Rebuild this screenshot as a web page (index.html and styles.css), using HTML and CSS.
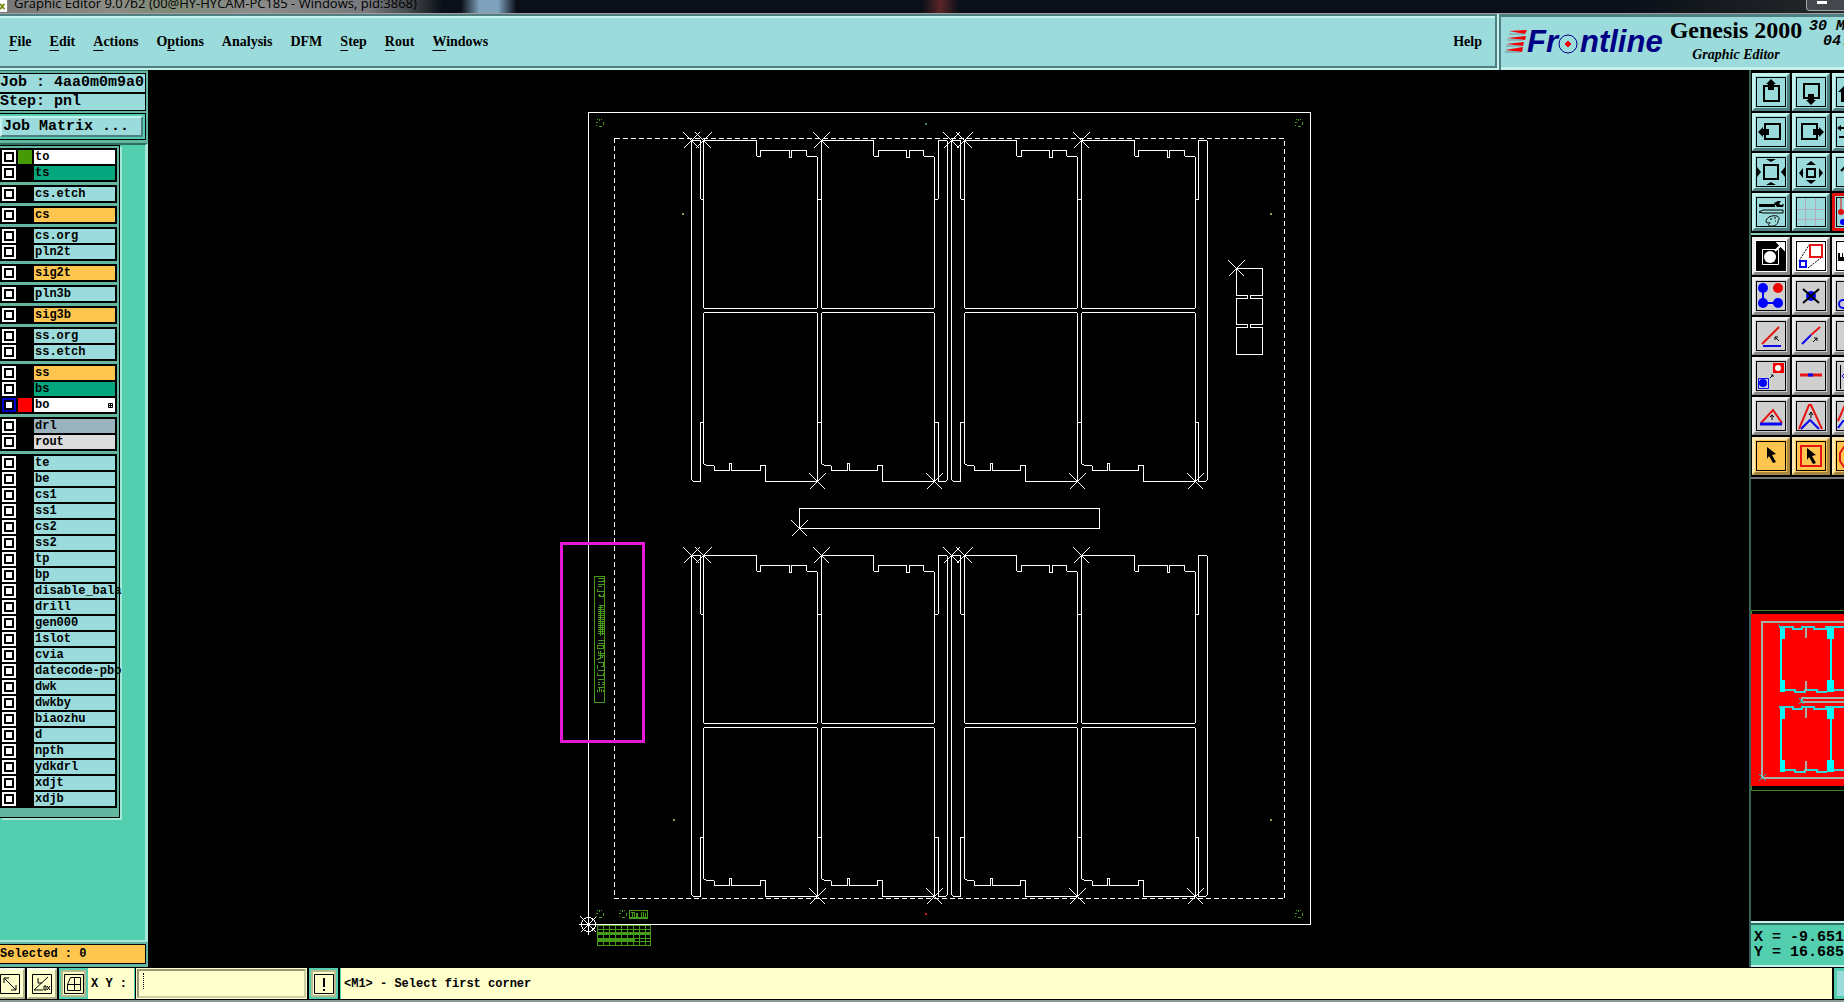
FILE: index.html
```html
<!DOCTYPE html>
<html lang="en">
<head>
<meta charset="utf-8">
<title>Graphic Editor</title>
<link rel="stylesheet" href="styles.css">
</head>
<body>
<header class="titlebar">
  <svg class="app-icon" viewBox="0 0 9 20" aria-hidden="true"><rect width="8" height="20" fill="#fff"/><path d="M0 11l5 6M5 11l-5 6" stroke="#7a8a10" stroke-width="2"/></svg>
  <span class="title">Graphic Editor 9.07b2 (00@HY-HYCAM-PC185 - Windows, pid:3868)</span>
  <span class="window-buttons"><i></i></span>
</header>

<div class="topbar">
  <nav class="menubar">
    <button><u>F</u>ile</button><button><u>E</u>dit</button><button><u>A</u>ctions</button><button>O<u>p</u>tions</button><button>Analysis</button><button>DFM</button><button><u>S</u>tep</button><button><u>R</u>out</button><button><u>W</u>indows</button>
    <button class="help">Help</button>
  </nav>
  <div class="brand">
    <svg class="logo" width="160" height="36" viewBox="0 0 160 36" role="img" aria-label="Frontline">
      <g fill="#f00000"><path d="M4 7l18-1-2 4zM2 14l19-2-1 4zM1 20l18-2-1 4zM0 26l18-3-1 5z"/></g>
      <path d="M4 10h15M2 16h16M1 22h15M0 28h15" stroke="#7a8f98" stroke-width="1"/>
      <g class="logo-text"><text x="22" y="28">Fr</text><text x="75" y="28">ntline</text></g>
      <circle cx="63" cy="20" r="9" fill="none" stroke="#000084" stroke-width="1"/>
      <path d="M63 17l3 3-3 3-3-3z" fill="#f00000" stroke="#f00000" stroke-width="1"/>
    </svg>
    <div class="product"><strong>Genesis 2000</strong><em>Graphic Editor</em></div>
    <div class="clock"><span>30 MAY</span><span class="time">04:12</span></div>
  </div>
</div>

<main class="workspace">
  <aside class="sidebar">
    <div class="job">
      <div class="cell">Job : 4aa0m0m9a0</div>
      <div class="cell">Step: pnl</div>
    </div>
    <div class="matrix"><button>Job Matrix ...</button></div>
    <div class="layer-area">
      <div class="layers">
        <div class="group">
          <label class="row"><input type="checkbox"><i class="swatch green"></i><span class="name white">to</span></label>
          <label class="row"><input type="checkbox"><i class="swatch"></i><span class="name jade">ts</span></label>
        </div>
        <div class="group"><label class="row"><input type="checkbox"><i class="swatch"></i><span class="name">cs.etch</span></label></div>
        <div class="group"><label class="row"><input type="checkbox"><i class="swatch"></i><span class="name amber">cs</span></label></div>
        <div class="group">
          <label class="row"><input type="checkbox"><i class="swatch"></i><span class="name">cs.org</span></label>
          <label class="row"><input type="checkbox"><i class="swatch"></i><span class="name">pln2t</span></label>
        </div>
        <div class="group"><label class="row"><input type="checkbox"><i class="swatch"></i><span class="name amber">sig2t</span></label></div>
        <div class="group"><label class="row"><input type="checkbox"><i class="swatch"></i><span class="name">pln3b</span></label></div>
        <div class="group"><label class="row"><input type="checkbox"><i class="swatch"></i><span class="name amber">sig3b</span></label></div>
        <div class="group">
          <label class="row"><input type="checkbox"><i class="swatch"></i><span class="name">ss.org</span></label>
          <label class="row"><input type="checkbox"><i class="swatch"></i><span class="name">ss.etch</span></label>
        </div>
        <div class="group">
          <label class="row"><input type="checkbox"><i class="swatch"></i><span class="name amber">ss</span></label>
          <label class="row"><input type="checkbox"><i class="swatch"></i><span class="name jade">bs</span></label>
          <label class="row"><input type="checkbox" class="work"><i class="swatch red"></i><span class="name white">bo<svg class="snap" width="5" height="5" viewBox="0 0 5 5" aria-hidden="true"><path d="M.5 .5h4v4h-4zM2.5 0v5M0 2.5h5" fill="none" stroke="#000"/></svg></span></label>
        </div>
        <div class="group">
          <label class="row"><input type="checkbox"><i class="swatch"></i><span class="name slate">drl</span></label>
          <label class="row"><input type="checkbox"><i class="swatch"></i><span class="name silver">rout</span></label>
        </div>
        <div class="group">
          <label class="row"><input type="checkbox"><i class="swatch"></i><span class="name">te</span></label>
          <label class="row"><input type="checkbox"><i class="swatch"></i><span class="name">be</span></label>
          <label class="row"><input type="checkbox"><i class="swatch"></i><span class="name">cs1</span></label>
          <label class="row"><input type="checkbox"><i class="swatch"></i><span class="name">ss1</span></label>
          <label class="row"><input type="checkbox"><i class="swatch"></i><span class="name">cs2</span></label>
          <label class="row"><input type="checkbox"><i class="swatch"></i><span class="name">ss2</span></label>
          <label class="row"><input type="checkbox"><i class="swatch"></i><span class="name">tp</span></label>
          <label class="row"><input type="checkbox"><i class="swatch"></i><span class="name">bp</span></label>
          <label class="row"><input type="checkbox"><i class="swatch"></i><span class="name">disable_bala</span></label>
          <label class="row"><input type="checkbox"><i class="swatch"></i><span class="name">drill</span></label>
          <label class="row"><input type="checkbox"><i class="swatch"></i><span class="name">gen000</span></label>
          <label class="row"><input type="checkbox"><i class="swatch"></i><span class="name">1slot</span></label>
          <label class="row"><input type="checkbox"><i class="swatch"></i><span class="name">cvia</span></label>
          <label class="row"><input type="checkbox"><i class="swatch"></i><span class="name">datecode-pbo</span></label>
          <label class="row"><input type="checkbox"><i class="swatch"></i><span class="name">dwk</span></label>
          <label class="row"><input type="checkbox"><i class="swatch"></i><span class="name">dwkby</span></label>
          <label class="row"><input type="checkbox"><i class="swatch"></i><span class="name">biaozhu</span></label>
          <label class="row"><input type="checkbox"><i class="swatch"></i><span class="name">d</span></label>
          <label class="row"><input type="checkbox"><i class="swatch"></i><span class="name">npth</span></label>
          <label class="row"><input type="checkbox"><i class="swatch"></i><span class="name">ydkdrl</span></label>
          <label class="row"><input type="checkbox"><i class="swatch"></i><span class="name">xdjt</span></label>
          <label class="row"><input type="checkbox"><i class="swatch"></i><span class="name">xdjb</span></label>
        </div>
      </div>
    </div>
    <div class="selected">Selected : 0</div>
  </aside>

  <svg class="canvas" viewBox="148 70 1601 897" role="img" aria-label="Panel pnl">
    <defs>
      <path id="x" d="M-8-8L8 8M8-8L-8 8"/>
      <path id="fid" d="M0-4V-2M-3-2L-2-3M3-2L2-3M-4 0H-2M4-1V2M-3 2V3M-1 4H2"/>
      <path id="ta" d="M0 0H53V15L54 16H57V10H86V17H88V10H103V15L104 16H113L114 17V167L113 168H1L0 167Z"/>
      <path id="tb" d="M0 0H52V15L53 16H57V10H85V17H88V10H102V15L103 16H112L113 17V167L112 168H1L0 167Z"/>
      <path id="ba" d="M1 0H113L114 1V169H62V153H57V158H28V151H26V158H11V154L10 153H3L0 151V1Z"/>
      <path id="bb" d="M1 0H112L113 1V169H61V153H56V158H28V151H26V158H10V154L9 153H3L0 151V1Z"/>
      <g id="array">
        <use href="#ta" x="703" y="140"/><use href="#tb" x="821" y="140"/><use href="#tb" x="964" y="140"/><use href="#ta" x="1081" y="140"/>
        <use href="#ba" x="703" y="312"/><use href="#bb" x="821" y="312"/><use href="#bb" x="964" y="312"/><use href="#ba" x="1081" y="312"/>
        <path d="M703 199H701L700 198V140H691V479L693 481H700V422H703M817 199H821M817 422H821M934 199H937L938 198V140H946L947 141V479L945 481H938V422H934M964 199H961L960 198V140H951V479L953 481H960V422H964M1077 199H1081M1077 422H1081M1195 199H1198V140H1206L1207 141V479L1205 481H1198V422H1195"/>
        <use href="#x" x="691" y="140"/><use href="#x" x="703" y="140"/><use href="#x" x="821" y="140"/><use href="#x" x="951" y="140"/><use href="#x" x="964" y="140"/><use href="#x" x="1081" y="140"/>
        <use href="#x" x="817" y="481"/><use href="#x" x="934" y="481"/><use href="#x" x="1077" y="481"/><use href="#x" x="1195" y="481"/>
      </g>
    </defs>
    <g class="lines" transform="translate(.5 .5)">
      <rect x="588" y="112" width="722" height="812"/>
      <rect x="614" y="138" width="670" height="760" stroke-dasharray="5 3"/>
      <use href="#array"/>
      <use href="#array" y="415"/>
      <path d="M799 508H1099V528H799Z"/><use href="#x" x="799" y="528"/>
      <path d="M1236 268H1262V295H1250V298H1262V324H1250V327H1262V354H1236V327H1247V324H1236V298H1247V295H1236Z"/><use href="#x" x="1236" y="268"/>
      <circle cx="588" cy="924" r="7"/><path d="M578 924H598M588 914V934"/><use href="#x" x="588" y="924"/>
    </g>
    <g class="marks" transform="translate(.5 .5)">
      <use href="#fid" x="599" y="122"/><use href="#fid" x="1298" y="122"/><use href="#fid" x="599" y="913"/><use href="#fid" x="622" y="913"/><use href="#fid" x="1298" y="913"/>
      <rect x="594" y="576" width="10" height="126"/>
      <path d="M597 578H603M597 581H603V579M597 584H603M597 586H601M597 588V591H603M599 593V596H603V593M597 595H600"/>
      <path d="M600 604V635M598 605H603M597 607H602M597 609H603M597 611H603M597 613H603M597 615H603M597 617H603M597 619H603M597 621H603M597 623H603M597 625H603M597 627H603M597 629H603M597 631H603M597 633H603M602 620V634"/>
      <path d="M597 640H603M597 643H603M597 645V648H603V645ZM598 650V653H603M597 655H603M600 650V657M597 659L603 656M597 662H603V665M597 664V668M600 666H603M597 670H603M597 672V675H603V672M597 679H603M597 682H599M601 682H603M597 684H599M601 684H603M597 687H603M599 686V691M601 688V691M597 689V691M603 689V691"/>
      <rect x="629" y="910" width="18" height="8"/><path d="M630 912H634M632 912V917M634 912V917M636 912V917M637 912V917H639M641 911V917M643 911V917M645 917V912M646 912H647M629 917H647"/>
      <path d="M597 925H650V945H597ZM597 929H650M597 932H650M597 933H650M597 934H650M597 938H634M597 939H634M597 940H634M597 941H650M634 938H650M603 925V945M609 925V945M615 925V945M621 925V945M627 925V945M633 925V945M639 925V945M645 925V945"/>
    </g>
    <g fill="#9b9b4c"><rect x="682" y="213" width="2" height="2"/><rect x="1270" y="213" width="2" height="2"/><rect x="673" y="819" width="2" height="2"/><rect x="1270" y="819" width="2" height="2"/><rect x="925" y="123" width="2" height="2" fill="#4c8050"/><rect x="925" y="913" width="2" height="2" fill="#c01010"/></g>
    <rect x="561.5" y="543.5" width="82" height="198" fill="none" stroke="#e619d9" stroke-width="3"/>
  </svg>

  <aside class="toolbox">
    <div class="tools">
      <button aria-label="Pan up"><svg viewBox="0 0 30 30"><path d="M8 9H23V24H8Z" class="k2"/><path d="M15 2l5 5h-2v6h-6V7h-2z"/></svg></button>
      <button aria-label="Pan down"><svg viewBox="0 0 30 30"><path d="M8 7H23V21H8Z" class="k2"/><path d="M15 28l5-5h-2v-6h-6v6h-2z"/></svg></button>
      <button aria-label="Home"><svg viewBox="0 0 30 30"><path d="M2 15L8 9V25H5V15Z"/></svg></button>
      <button aria-label="Pan left"><svg viewBox="0 0 30 30"><path d="M9 7H24V22H9Z" class="k2"/><path d="M2 15l5-5v2h6v6H7v2z"/></svg></button>
      <button aria-label="Pan right"><svg viewBox="0 0 30 30"><path d="M6 7H21V22H6Z" class="k2"/><path d="M28 15l-5-5v2h-6v6h6v2z"/></svg></button>
      <button aria-label="Previous view"><svg viewBox="0 0 30 30"><path d="M1 11l4-3v2h9v2H5v2zM3 19h12v2H3z"/></svg></button>
      <button aria-label="Zoom in"><svg viewBox="0 0 30 30"><path d="M8 8H22V22H8Z" class="k2"/><path d="M15 5l-5-3h10zM15 25l-5 3h10zM5 15L1 10v10zM25 15l4-5v10z"/></svg></button>
      <button aria-label="Zoom out"><svg viewBox="0 0 30 30"><path d="M11 12H19V20H11Z" class="k2"/><path d="M15 4l5 4H10zM15 27l5-4H10zM3 16l4-5v10zM27 16l-4-5v10z"/></svg></button>
      <button aria-label="Zoom undo"><svg viewBox="0 0 30 30"><path d="M5 14l4-4" class="k2"/></svg></button>
      <button aria-label="Options"><svg viewBox="0 0 30 30"><path d="M3 7h16v3H3zM18 6l4-2h3l-2 3 2 1 3-1-1 3h-6z"/><path d="M3 15l4-2h20v3H7zM10 25c0-5 6-7 11-6 4 2 1 4 1 6s-4 5-8 4c-3-1-1-2 0-3s-3 1-4-1zM14 22h2M18 21h2M19 24h1" class="k"/></svg></button>
      <button aria-label="Grid"><svg viewBox="0 0 30 30"><path d="M9.5 1v28M19.5 1v28M1 12.5h28M1 22.5h28" stroke="#b5a9bd"/></svg></button>
      <button class="on" aria-label="Nets"><svg viewBox="0 0 30 30"><path d="M5 1v13" stroke="#e01010"/><circle cx="5" cy="15" r="3" fill="#e01010"/><circle cx="7" cy="25" r="3" fill="#00f"/></svg></button>
    </div>
    <div class="tools grey">
      <button class="white" aria-label="Features"><svg viewBox="0 0 30 30"><path d="M1 1h28v28H1z"/><path d="M6.5 8.5h16v15h-16z" fill="none" stroke="#fff"/><circle cx="14" cy="16" r="6" fill="#fff"/><path d="M19 10l5-5M22 2h6v6z" stroke="#fff" stroke-width="2" fill="#fff"/></svg></button>
      <button class="white" aria-label="Scale"><svg viewBox="0 0 30 30"><path d="M3 20L13 4M12 27L26 16" class="k" stroke-dasharray="2 1"/><path d="M14 4h12v12H14z" class="r2"/><path d="M4 20h6v6H4z" class="b2"/></svg></button>
      <button class="white" aria-label="Measure"><svg viewBox="0 0 30 30"><path d="M2 12h2v4h2v-4h1v4h2v-4h2v8H2z"/></svg></button>
      <button aria-label="Add feature"><svg viewBox="0 0 30 30"><path d="M7 7v15h15" stroke="#00f" stroke-width="2" fill="none"/><g fill="#00f"><circle cx="7" cy="7" r="5"/><circle cx="7" cy="22" r="5"/><circle cx="22" cy="22" r="5"/></g><circle cx="22" cy="7" r="5" fill="#f00000"/></svg></button>
      <button aria-label="Delete"><svg viewBox="0 0 30 30"><circle cx="15" cy="15" r="5" fill="#00f"/><path d="M7 8l16 14M23 8L7 22" class="k2"/></svg></button>
      <button aria-label="Reshape"><svg viewBox="0 0 30 30"><circle cx="7" cy="23" r="4" class="b2"/></svg></button>
      <button aria-label="Rotate line"><svg viewBox="0 0 30 30"><path d="M6 23L23 6" class="r2"/><path d="M7 25h18" class="b2"/><path d="M23 20l-4-4m0 3v-3h3" class="k"/></svg></button>
      <button aria-label="Extend line"><svg viewBox="0 0 30 30"><path d="M15 14L24 6" class="r2"/><path d="M6 23L15 14" class="b2"/><path d="M17 21l4-4m-3 0h3v3" class="k"/></svg></button>
      <button aria-label="Trim"><svg viewBox="0 0 30 30"></svg></button>
      <button aria-label="Copy pad"><svg viewBox="0 0 30 30"><path d="M17 2h11v10H17z" fill="#f00000"/><circle cx="22" cy="7" r="3" fill="#fff"/><path d="M2.5 17.5h10v10h-10z" class="b1"/><circle cx="7" cy="22" r="4" fill="#00f"/><path d="M14 17l3-3m-2 0h2v2" class="k"/></svg></button>
      <button aria-label="Break line"><svg viewBox="0 0 30 30"><path d="M4 14h22" class="r3"/><path d="M12 14h5" class="b3"/></svg></button>
      <button aria-label="Move edge"><svg viewBox="0 0 30 30"><path d="M4.5 4v24" class="k"/><path d="M10 11l-4 4 4 4" class="b1"/></svg></button>
      <button aria-label="Stretch"><svg viewBox="0 0 30 30"><path d="M5 22L17 9l9 13" class="r2"/><path d="M4 23h22" class="b3"/><path d="M16 19v-4m-2 1l2-2 2 2" class="k"/></svg></button>
      <button aria-label="Offset"><svg viewBox="0 0 30 30"><path d="M3 28L13 4h2l11 24" class="r2"/><path d="M5 28l9-9 9 9" class="b2"/><path d="M15 17v-5m-2 2l2-3 2 3" class="k"/></svg></button>
      <button aria-label="Corner"><svg viewBox="0 0 30 30"><path d="M2 20L9 4" class="r2"/><path d="M2 27l5-7h5" class="b2"/></svg></button>
      <button class="amber" aria-label="Select"><svg viewBox="0 0 30 30"><path d="M11 6l9 7-4 1 4 7-3 1-4-7-2 3z"/></svg></button>
      <button class="amber" aria-label="Select in frame"><svg viewBox="0 0 30 30"><path d="M5 5h20v20H5z" class="r2"/><path d="M11 7l9 7-4 1 4 7-3 1-4-7-2 3z"/></svg></button>
      <button class="amber" aria-label="Select in polygon"><svg viewBox="0 0 30 30"><path d="M10 6H8L4 12v8l4 6h2" class="r2"/></svg></button>
    </div>
    <div class="overview">
      <svg width="95" height="182" viewBox="1749 609 95 182" role="img" aria-label="Overview">
        <path d="M1844 610.5H1751.5V790.5H1844" fill="none" stroke="#4a8a20"/>
        <path d="M1751 614h93v172h-93z" fill="#f00"/>
        <path d="M1844 622H1762V778H1844M1844 698H1802V702H1844" fill="none" stroke="#a8b0a8" stroke-width="2"/>
        <g id="mini" fill="none"><path d="M1781 628V692M1831 628V692" stroke="#00ffff" stroke-width="2"/><path d="M1780 626h5v13h-4zM1827 626h7v13h-7zM1781 680h4v12h-4zM1827 680h7v12h-7z" fill="#00ffff"/><path d="M1779 627h14v2h9v-2h12v2h12v-2h18M1785 690h10v2h10v-2h12v2h10M1834 690h10" stroke="#2fd6d6" stroke-width="2"/><path d="M1806 628v10M1806 681v10" stroke="#a8b0a8" stroke-width="2"/></g>
        <use href="#mini" y="80"/>
        <path d="M1759 774l7 7M1766 774l-7 7M1778 624l6 6M1799 698l5 6M1804 698l-5 6" stroke="#00c8c8"/>
      </svg>
    </div>
    <div class="coords"><span>X = -9.651</span><span>Y = 16.685</span></div>
  </aside>
</main>

<footer class="statusbar">
  <button class="sb first" aria-label="Line mode"><svg viewBox="0 0 20 20"><path d="M.5 .5h19v19H.5zM4 4l12 12M4 9V4h5M16 11v5h-5" class="k"/></svg></button>
  <button class="sb" aria-label="Angle mode"><svg viewBox="0 0 20 20"><path d="M.5 .5h19v19H.5zM2 16L16 3M6 4v5h4M2 16h9M14 12h-2v4h2zM15 12l3 4M18 12l-3 4" class="k"/></svg></button>
  <button class="sb teal" aria-label="Snap grid"><svg viewBox="0 0 20 20"><path d="M.5 .5h19v19H.5zM3.500 10.500l3-7h10v13h-13zM10.500 3v13M3 10.500h13" class="k"/></svg></button>
  <label class="xy" for="xy">X Y :</label>
  <div class="entry"><input id="xy" type="text"><i class="caret"></i></div>
  <button class="sb teal bang" aria-label="Message"><svg viewBox="0 0 20 20"><path d="M.5 .5h19v19H.5z" class="k"/><path d="M9 4h2v9H9zM9 15h2v2H9z"/></svg></button>
  <output class="message">&lt;M1&gt; - Select first corner</output>
  <span class="end"></span>
</footer>
</body>
</html>
```
FILE: styles.css
```css
:root {
  --teal: #9bdbdb;
  --mint: #53ceae;
  --mint-dark: #2f6f60;
  --light: #c4f2ee;
  --shade: #4f7f80;
  --amber: #ffc64f;
  --cream: #ffffcc;
  --mono: "Liberation Mono", "Courier New", monospace;
  --serif: "Liberation Serif", "Times New Roman", serif;
}

* { box-sizing: border-box; }

body {
  margin: 0;
  height: 100vh;
  display: flex;
  flex-direction: column;
  overflow: hidden;
  background: #000;
  color: #000;
  font: bold 12px/16px var(--mono);
}

button {
  margin: 0;
  padding: 0;
  border: 0;
  background: none;
  color: inherit;
  font: inherit;
}

svg { display: block; }

.k, .k2, .r2, .r3, .b1, .b2, .b3 { fill: none; stroke: #000; stroke-width: 1; }
.k2, .r2, .b2 { stroke-width: 2; }
.r3, .b3 { stroke-width: 3; }
.r2, .r3 { stroke: #e81414; }
.b1, .b2, .b3 { stroke: #0a0af0; }

/* Title bar */
.titlebar {
  flex: none;
  display: flex;
  align-items: flex-end;
  gap: 6px;
  height: 14px;
  overflow: hidden;
  border-bottom: 1px solid #a0a0a0;
  background: linear-gradient(90deg, #777 0, #8d8d86 6%, #7f8a76 9%, #8c8c8c 14%, #77797c 20%, #4a4d51 22%, #0a0f18 24%, #0a0f18 25%, #7fa3bd 26%, #7fa3bd 27%, #0a0f18 28%, #0b1018 50%, #5a2528 51%, #0a0f18 52%, #0a0f18 88%, #26292b 100%);
}
.app-icon { width: 8px; height: 20px; flex: none; }
.title {
  flex: 1;
  white-space: nowrap;
  font: 13px/20px "Open Sans", "Noto Sans", sans-serif;
}
.window-buttons {
  flex: none;
  width: 38px;
  height: 12px;
  padding: 2px 10px;
  margin-bottom: 2px;
  border: 1px solid #a0a4a8;
  border-width: 0 0 1px 1px;
  border-radius: 0 0 0 4px;
  background: #44484c;
}
.window-buttons i { display: block; width: 10px; height: 3px; background: #fff; }

/* Menu and brand */
.topbar { flex: none; display: flex; height: 56px; background: var(--teal); }
.menubar {
  flex: 1;
  display: flex;
  align-items: center;
  gap: 18px;
  padding: 2px 13px 0 9px;
  border: 2px solid var(--shade);
  border-left: 0;
  box-shadow: inset 0 2px var(--light), 0 2px var(--light);
  margin-bottom: 2px;
  font: bold 14px/20px var(--serif);
}
.menubar u { text-underline-offset: 4px; text-decoration-skip-ink: none; }
.help { margin-left: auto; }
.brand {
  flex: none;
  display: flex;
  width: 345px;
  overflow: hidden;
  margin-left: 2px;
  padding-left: 4px;
  border: solid var(--shade);
  border-width: 3px 0 0 2px;
  box-shadow: inset 0 -3px var(--light), -2px 0 var(--light);
}
.logo { flex: none; margin: 7px 0 0; }
.logo-text { font: italic bold 31px "Liberation Sans", Arial, sans-serif; fill: #000084; }
.product { flex: none; display: flex; flex-direction: column; align-items: center; width: 134px; margin-left: 4px; }
.product strong { font: bold 24px/26px var(--serif); white-space: nowrap; }
.product em { font: italic bold 14px/24px var(--serif); }
.clock { flex: none; display: flex; flex-direction: column; margin-left: 6px; font: italic bold 15px/15px var(--mono); padding-top: 2px; }
.time { padding-left: 14px; }

/* Workspace */
.workspace { flex: 1; min-height: 0; display: flex; }

.sidebar {
  flex: none;
  display: flex;
  flex-direction: column;
  width: 148px;
  background: #63b7a0;
  box-shadow: inset 0 1px #2f6f60;
}
.job { margin: 3px 2px 0 0; border: 1px solid #000; border-left: 0; background: var(--teal); font-size: 15px; line-height: 18px; }
.job .cell { height: 18px; white-space: pre; }
.job .cell + .cell { border-top: 2px solid #000; line-height: 16px; }
.matrix { margin: 2px 2px 3px 0; padding: 2px; border: 1px solid #000; border-left: 0; padding-left: 0; background: var(--mint); }
.matrix button {
  display: block;
  width: 100%;
  padding-left: 1px;
  border: 2px solid;
  border-color: var(--light) var(--shade) var(--shade) var(--light);
  background: var(--teal);
  font-size: 15px;
  line-height: 17px;
  text-align: left;
  white-space: pre;
}
.layer-area {
  flex: 1;
  min-height: 0;
  border: solid;
  border-width: 2px 3px 2px 0;
  border-color: var(--mint-dark) #a5e8da #a5e8da;
  background: var(--mint);
}
.layers {
  display: flex;
  flex-direction: column;
  gap: 3px;
  width: 120px;
  padding: 2px 2px 9px 0;
  border: solid #000;
  border-width: 1px 1px 1px 0;
  background: #63b7a0;
  box-shadow: 2px 2px #a5e8da;
}
.group { width: 117px; padding: 1px 0; background: #000; }
.row { display: flex; align-items: center; gap: 2px; height: 16px; padding: 0 0 0 2px; }
.row input {
  appearance: none;
  flex: none;
  width: 14px;
  height: 14px;
  margin: 0;
  border: 2px solid #fff;
  background: #fff;
  box-shadow: inset 0 0 0 2px #000;
}
.row input.work { border-color: #0000c8; }
.swatch { flex: none; width: 14px; height: 14px; }
.swatch.green { background: #459a05; }
.swatch.red { background: #f00; }
.name { display: flex; align-items: center; width: 81px; height: 14px; padding-left: 1px; background: var(--teal); white-space: pre; line-height: 14px; }
.name.white { background: #fff; }
.name.jade { background: #04a67e; }
.name.amber { background: var(--amber); }
.name.slate { background: #9ab3bd; }
.name.silver { background: #dcdcdc; }
.snap { margin: 0 2px 0 auto; }
.selected {
  flex: none;
  margin: 2px 2px 3px 0;
  border: 1px solid #000;
  border-left: 0;
  background: var(--amber);
  line-height: 18px;
}

.canvas { flex: 1; min-width: 0; height: 100%; }
.lines { fill: none; stroke: #fff; shape-rendering: crispEdges; }
.marks { fill: none; stroke: #459a1a; shape-rendering: crispEdges; }

/* Toolbox */
.toolbox {
  flex: none;
  display: flex;
  flex-direction: column;
  width: 95px;
  overflow: hidden;
  border-left: 2px solid #38635a;
}
.tools {
  flex: none;
  display: grid;
  grid-template-columns: repeat(3, 38px);
  grid-auto-rows: 38px;
  gap: 2px;
  padding: 3px 1px 2px;
  border-bottom: 2px solid #8fcfc0;
}
.tools.grey { padding-top: 2px; border-color: #777; }
.tools button {
  padding: 1px;
  border: 3px solid;
  border-color: var(--light) var(--shade) var(--shade) var(--light);
  background: var(--teal);
}
.tools svg { width: 30px; height: 30px; outline: 1px solid #000; outline-offset: -1px; }
.tools.grey button { background: #cfcfcf; border-color: #efefef #888 #888 #efefef; }
.tools.grey .white { background: #fff; }
.tools.grey .amber { background: var(--amber); border-color: #ffe9b0 #a8863c #a8863c #ffe9b0; }
.tools .on { border-color: #e01010; }
.overview { flex: 1; display: flex; align-items: center; margin-left: -2px; }
.coords {
  flex: none;
  display: flex;
  flex-direction: column;
  height: 46px;
  padding: 7px 0 0 3px;
  border: solid var(--light);
  border-width: 2px 0;
  background: var(--mint);
  box-shadow: inset 0 2px var(--mint-dark);
  font-size: 15px;
  line-height: 15px;
  white-space: pre;
}

/* Status bar */
.statusbar {
  flex: none;
  display: flex;
  height: 35px;
  padding: 1px 0;
  border-bottom: 2px solid #8a9a9a;
  background: #000;
}
.statusbar > * { flex: none; }
.sb {
  display: flex;
  align-items: center;
  justify-content: center;
  width: 30px;
  margin-right: 2px;
  border: 2px solid #fff;
  border-color: #fffff0 #b0b08c #b0b08c #fffff0;
  background: var(--cream);
}
.sb.first { width: 25px; border-left: 0; justify-content: flex-start; }
.sb svg { width: 20px; height: 20px; }
.sb.teal { width: 29px; margin-right: 0; border-color: var(--mint); box-shadow: inset 0 0 0 2px #b9b98f; }
.sb.bang { margin: 0 2px; }
.xy {
  display: flex;
  align-items: center;
  width: 47px;
  padding-left: 3px;
  border-right: 1px solid var(--mint);
  background: var(--cream);
  white-space: pre;
}
.entry { position: relative; width: 171px; margin-left: 1px; background: var(--cream); padding: 1px; }
.entry input {
  width: 100%;
  height: 100%;
  padding: 0 6px;
  border: 2px solid;
  border-color: #99997a #cfcfa4 #cfcfa4 #99997a;
  background: var(--cream);
  font: inherit;
}
.caret { position: absolute; left: 7px; top: 5px; height: 16px; border-left: 1px dotted #000; }
.statusbar .message {
  flex: 1;
  display: flex;
  align-items: center;
  padding-left: 3px;
  border-left: 1px solid var(--mint);
  background: var(--cream);
  white-space: pre;
}
.end { width: 10px; margin-left: 2px; border: 3px solid var(--mint); border-right: 0; background: var(--teal); }
```
